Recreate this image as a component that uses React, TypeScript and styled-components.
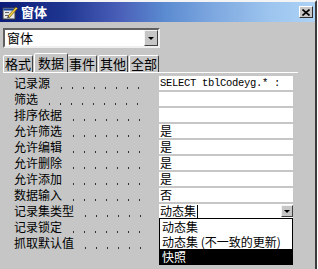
import React from 'react';
import styled, { createGlobalStyle } from 'styled-components';

const Global = createGlobalStyle`
  html, body { margin: 0; padding: 0; background: #ffffff; }
  body { font-family: "Noto Sans CJK SC", "Liberation Sans", sans-serif; }
  #root { width: 318px; height: 269px; overflow: hidden; }
`;

const Window = styled.div`
  position: relative;
  box-sizing: border-box;
  width: 317px;
  height: 269px;
  background: #c6c6c6;
  border-top: 2px solid #f4f4f4;
  border-right: 2px solid #3c3c3c;
  display: flex;
  flex-direction: column;
`;

const TitleBar = styled.div`
  height: 20px;
  display: flex;
  align-items: center;
  padding: 0 1px 0 2px;
  gap: 3px;
  background: linear-gradient(to right, #0a1c78 0%, #1e3590 20%, #4a5fb8 38%, #5a8ad0 52%, #7ea8e0 68%, #9cc4ee 85%, #acd2f6 100%);
`;

const Title = styled.span`
  color: #ffffff;
  font-weight: bold;
  font-size: 13px;
  line-height: 20px;
  flex: 1;
`;

const CloseBtn = styled.div`
  width: 14px;
  height: 12px;
  box-sizing: border-box;
  background: #c6c6c6;
  border: 1px solid;
  border-color: #ffffff #303030 #303030 #ffffff;
  display: flex;
  align-items: center;
  justify-content: center;
  margin-right: 1px;
`;

const Combo = styled.div`
  margin: 6px 0 0 3px;
  width: 157px;
  height: 20px;
  box-sizing: border-box;
  background: #ffffff;
  border: 2px solid;
  border-color: #606060 #f0f0f0 #f0f0f0 #606060;
  display: flex;
  align-items: center;
  padding-left: 2px;
`;

const ComboText = styled.span`
  flex: 1;
  font-size: 13px;
  line-height: 16px;
  color: #000;
`;

const DropBtn = styled.div<{ $small?: boolean }>`
  width: ${p => (p.$small ? 12 : 14)}px;
  height: ${p => (p.$small ? 12 : 16)}px;
  box-sizing: border-box;
  background: #c6c6c6;
  border: 1px solid;
  border-color: #f4f4f4 #404040 #404040 #f4f4f4;
  display: flex;
  align-items: center;
  justify-content: center;
`;

const Arrow = styled.div`
  width: 0;
  height: 0;
  border-left: 3px solid transparent;
  border-right: 3px solid transparent;
  border-top: 3px solid #000;
`;

const TabStrip = styled.div`
  margin: 5px 0 0 3px;
  height: 19px;
  display: flex;
  align-items: flex-end;
`;

const Tab = styled.div<{ $active?: boolean }>`
  position: relative;
  box-sizing: border-box;
  height: ${p => (p.$active ? 19 : 17)}px;
  padding: 0 ${p => (p.$active ? 3 : 1)}px;
  margin: 0 ${p => (p.$active ? -1 : 1)}px 0 0;
  border: 1px solid;
  border-bottom: none;
  border-color: #ffffff #404040 transparent #ffffff;
  border-radius: 2px 2px 0 0;
  font-size: 13px;
  line-height: ${p => (p.$active ? 18 : 16)}px;
  color: #000;
  background: #c6c6c6;
  z-index: ${p => (p.$active ? 2 : 1)};
`;

const Panel = styled.div`
  flex: 1;
  margin: 0 0 0 3px;
  padding-top: 3px;
  border-top: 1px solid #ffffff;
  width: 295px;
`;

const Row = styled.div`
  display: grid;
  grid-template-columns: 156px 134px;
  height: 16px;
`;

const Label = styled.div`
  display: flex;
  align-items: center;
  height: 14px;
  padding-left: 11px;
  font-size: 12px;
  line-height: 14px;
  color: #000;
  white-space: nowrap;
`;

const Leader = styled.div`
  flex: 1;
  height: 14px;
  margin: 0 12px 0 6px;
  background-image: radial-gradient(circle, #333 0.7px, transparent 1px);
  background-size: 11px 2px;
  background-position: 0 11px;
  background-repeat: repeat-x;
`;

const Value = styled.div`
  position: relative;
  height: 14px;
  background: #ffffff;
  display: flex;
  align-items: center;
  padding-left: 1px;
  font-size: 12px;
  line-height: 14px;
  color: #000;
  white-space: nowrap;
`;

const Mono = styled.span`
  font-family: "Liberation Mono", monospace;
  font-size: 10.5px;
  letter-spacing: -0.3px;
`;

const Caret = styled.span`
  width: 1px;
  height: 13px;
  background: #000;
  margin-left: 1px;
  flex: none;
`;

const Spacer = styled.span`
  flex: 1;
`;

const ListBox = styled.div`
  position: absolute;
  top: 14px;
  left: 0;
  width: 134px;
  box-sizing: border-box;
  background: #ffffff;
  border: 1px solid #000;
  z-index: 5;
`;

const ListItem = styled.div<{ $sel?: boolean }>`
  height: 15px;
  line-height: 15px;
  padding-left: 2px;
  font-size: 12px;
  background: ${p => (p.$sel ? '#000' : '#fff')};
  color: ${p => (p.$sel ? '#fff' : '#000')};
`;

const FormIcon = () => (
  <svg width="16" height="15" viewBox="0 0 16 15">
    <rect x="1" y="3" width="12" height="11" fill="#e8e8e8" stroke="#404040" strokeWidth="1" />
    <rect x="1.5" y="3.5" width="11" height="2" fill="#1040a0" />
    <rect x="3" y="7" width="4" height="1" fill="#606060" />
    <rect x="3" y="10" width="4" height="1" fill="#606060" />
    <path d="M6 11 L14 2 L15.5 3.5 L7.5 12.5 Z" fill="#f0d040" stroke="#705010" strokeWidth="0.7" />
    <path d="M6 11 L7.5 12.5 L5 13 Z" fill="#303030" />
  </svg>
);

const XIcon = () => (
  <svg width="8" height="7" viewBox="0 0 8 7">
    <path d="M0.5 0.5 L7.5 6.5 M7.5 0.5 L0.5 6.5" stroke="#000" strokeWidth="1.6" />
  </svg>
);

const rows: { label: string; value?: React.ReactNode; kind?: string }[] = [
  { label: '记录源', kind: 'sql' },
  { label: '筛选' },
  { label: '排序依据' },
  { label: '允许筛选', value: '是' },
  { label: '允许编辑', value: '是' },
  { label: '允许删除', value: '是' },
  { label: '允许添加', value: '是' },
  { label: '数据输入', value: '否' },
  { label: '记录集类型', kind: 'combo' },
  { label: '记录锁定' },
  { label: '抓取默认值' },
];

const tabs = ['格式', '数据', '事件', '其他', '全部'];

export default function App() {
  return (
    <>
      <Global />
      <Window>
        <TitleBar>
          <FormIcon />
          <Title>窗体</Title>
          <CloseBtn>
            <XIcon />
          </CloseBtn>
        </TitleBar>
        <Combo>
          <ComboText>窗体</ComboText>
          <DropBtn>
            <Arrow />
          </DropBtn>
        </Combo>
        <TabStrip>
          {tabs.map(t => (
            <Tab key={t} $active={t === '数据'}>
              {t}
            </Tab>
          ))}
        </TabStrip>
        <Panel>
          {rows.map(r => (
            <Row key={r.label}>
              <Label>
                {r.label}
                <Leader />
              </Label>
              <Value>
                {r.kind === 'sql' && <Mono>SELECT tblCodeyg.* :</Mono>}
                {r.kind === 'combo' && (
                  <>
                    动态集
                    <Caret />
                    <Spacer />
                    <DropBtn $small>
                      <Arrow />
                    </DropBtn>
                    <ListBox>
                      <ListItem>动态集</ListItem>
                      <ListItem>动态集 (不一致的更新)</ListItem>
                      <ListItem $sel>快照</ListItem>
                    </ListBox>
                  </>
                )}
                {r.value}
              </Value>
            </Row>
          ))}
        </Panel>
      </Window>
    </>
  );
}
